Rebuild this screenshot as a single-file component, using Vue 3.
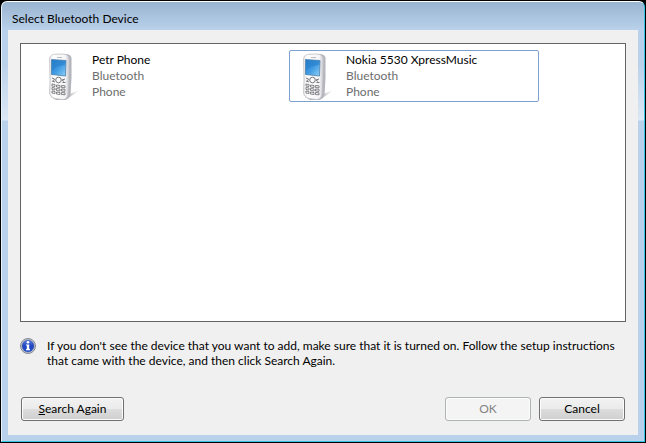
<template>
  <div class="window">
    <div class="frame">
      <header class="titlebar">Select Bluetooth Device</header>

      <main class="panel">
        <ul class="devices" aria-label="Devices">
          <li
            v-for="device in devices"
            :key="device.name"
            class="device"
            :class="{ focused: device.name === current }"
            @click="current = device.name"
          >
            <svg class="phone" viewBox="0 0 48 48" aria-hidden="true">
              <defs>
                <linearGradient id="body" x1="0" x2="1" y1="0" y2="0">
                  <stop offset="0" stop-color="#e4e4e8" />
                  <stop offset="0.2" stop-color="#ffffff" />
                  <stop offset="0.8" stop-color="#f4f4f6" />
                  <stop offset="1" stop-color="#c2c2ca" />
                </linearGradient>
                <linearGradient id="screen" x1="0" x2="1" y1="0" y2="1">
                  <stop offset="0" stop-color="#2c86d2" />
                  <stop offset="0.5" stop-color="#3f9ae2" />
                  <stop offset="1" stop-color="#8fd0f8" />
                </linearGradient>
                <linearGradient id="shadow" x1="0" x2="1" y1="0" y2="0">
                  <stop offset="0" stop-color="#777" stop-opacity="0.8" />
                  <stop offset="1" stop-color="#999" stop-opacity="0" />
                </linearGradient>
              </defs>
              <path d="M27 46 L31 42 L43 37 L40 40 L30 46.500 Z" fill="url(#shadow)" />
              <path d="M19 1 L29 1 Q35 1 35.500 5 L35.500 25 L34.500 42 Q33 46 29 47 L20 47 L15 44 Z" fill="#b4b4bc" />
              <path d="M13.500 6 Q14 1.500 19 1.200 L27 1 Q33 1.500 33.500 6 L33 26 L32 42 Q31 46.500 26 46.500 L19 45.500 Q13.500 44 13.500 39 L14 27 Z" fill="url(#body)" stroke="#bdbdc3" stroke-width="0.7" />
              <path d="M21 4.500 h5" stroke="#bbb" stroke-width="1" />
              <path d="M15.500 6.500 L30 7.500 L29.500 23 L15.500 21.500 Z" fill="url(#screen)" stroke="#4a7dab" stroke-width="0.8" />
              <path d="M16 7 L29.500 8 L29 12 Q21 12 16 18 Z" fill="#1d70bd" opacity="0.4" />
              <g fill="none" stroke="#77777e" stroke-width="1">
                <circle cx="22.500" cy="27" r="2.800" />
                <path d="M16 25 l2.500 1 l-1 2 M16 28 l3 1 M29 26 l-3 1 l2 1.500 M26.500 29.500 l3 0" />
              </g>
              <g fill="none" stroke="#77777e" stroke-width="0.9">
                <path d="M16 31 l3 .5 v2 l-3 -.5z M20.500 32 l3.500 .5 v2 l-3.500 -.5z M25.500 32.500 l3.500 .3 v2 l-3.500 -.3z" />
                <path d="M16 34.500 l3 .5 v2 l-3 -.5z M20.500 35.500 l3.500 .5 v2 l-3.500 -.5z M25.500 36 l3.500 .3 v2 l-3.500 -.3z" />
                <path d="M16 38 l3 .5 v2 l-3 -.5z M20.500 39 l3.500 .5 v2 l-3.500 -.5z M25.500 39.500 l3.500 .3 v2 l-3.500 -.3z" />
              </g>
            </svg>
            <div class="details">
              <div class="name">{{ device.name }}</div>
              <div>{{ device.kind }}</div>
              <div>{{ device.type }}</div>
            </div>
          </li>
        </ul>

        <div class="hint">
          <svg class="info" viewBox="0 0 16 16" aria-hidden="true">
            <defs>
              <linearGradient id="ball" x1="0" x2="0" y1="0" y2="1">
                <stop offset="0" stop-color="#5b80dc" />
                <stop offset="0.5" stop-color="#1e45c0" />
                <stop offset="1" stop-color="#2456d0" />
              </linearGradient>
            </defs>
            <circle cx="8" cy="8" r="7.500" fill="#c9cdd6" stroke="#858993" />
            <circle cx="8" cy="8" r="6" fill="url(#ball)" stroke="#3e5595" stroke-width="0.5" />
            <circle cx="8" cy="4.300" r="1.300" fill="#fff" />
            <path d="M6 6.500 H9.200 V11 H10 V12.300 H6 V11 H6.800 V7.500 H6 Z" fill="#fff" />
          </svg>
          <p>
            If you don't see the device that you want to add, make sure that it is turned on. Follow the setup instructions
            that came with the device, and then click Search Again.
          </p>
        </div>

        <footer class="actions">
          <button class="search" type="button" accesskey="s"><u>S</u>earch Again</button>
          <button type="button" disabled>OK</button>
          <button type="button">Cancel</button>
        </footer>
      </main>
    </div>
  </div>
</template>

<script setup>
import { ref } from 'vue'

const devices = [
  { name: 'Petr Phone', kind: 'Bluetooth', type: 'Phone' },
  { name: 'Nokia 5530 XpressMusic', kind: 'Bluetooth', type: 'Phone' }
]
const current = ref('Nokia 5530 XpressMusic')
</script>

<style>
body {
  margin: 0;
  background: #000;
}
</style>

<style scoped>
.window {
  box-sizing: border-box;
  display: flex;
  min-height: 100vh;
  padding: 1px;
  font-family: "Segoe UI", Lato, "Open Sans", sans-serif;
  font-size: 12px;
  line-height: 16px;
  color: #000;
}
.frame {
  flex: 1;
  min-width: 0;
  display: flex;
  flex-direction: column;
  padding: 0 6px 6px;
  border: 1px solid #35c5e4;
  border-top-color: #fff;
  border-left-color: #e8f4fc;
  border-radius: 6px 6px 0 0;
  background:
    linear-gradient(#99b4d1, #b9d1ea) top / 100% 28px no-repeat,
    linear-gradient(#b9d1ea 28px, #b9d1ea 60px, #dce8f5 118px, #b9d1ea 119px);
}
.titlebar {
  padding: 9px 4px 3px;
}
.panel {
  flex: 1;
  display: flex;
  flex-direction: column;
  padding: 13px 12px 14px;
  background: #f0f0f0;
}
.devices {
  flex: 1;
  display: flex;
  flex-wrap: wrap;
  align-content: flex-start;
  gap: 4px;
  margin: 0;
  padding: 6px 14px;
  border: 1px solid #646464;
  background: #fff;
  list-style: none;
}
.device {
  box-sizing: border-box;
  display: flex;
  gap: 8px;
  width: 250px;
  height: 52px;
  border: 1px solid transparent;
  border-radius: 2px;
}
.device.focused {
  border-color: #7da2ce;
}
.phone {
  width: 48px;
  height: 48px;
  margin-top: 2px;
}
.details {
  padding-top: 1px;
  color: #6d6d6d;
}
.name {
  color: #000;
}
.hint {
  display: flex;
  gap: 11px;
  margin-top: 16px;
  line-height: 15px;
}
.info {
  flex: none;
  width: 16px;
  height: 16px;
}
.hint p {
  margin: 0;
}
.actions {
  display: flex;
  gap: 8px;
  margin-top: 29px;
  padding: 0 1px;
}
button {
  box-sizing: border-box;
  width: 86px;
  height: 24px;
  padding: 0;
  border: 1px solid #707070;
  border-radius: 3px;
  background: linear-gradient(#f2f2f2, #ebebeb 50%, #dddddd 50%, #cfcfcf);
  box-shadow: inset 0 0 0 1px #fcfcfc;
  color: #000;
  font: inherit;
}
button:disabled {
  border-color: #adb2b5;
  background: #f4f4f4;
  color: #838383;
}
.search {
  width: 103px;
  margin-right: auto;
}
</style>
